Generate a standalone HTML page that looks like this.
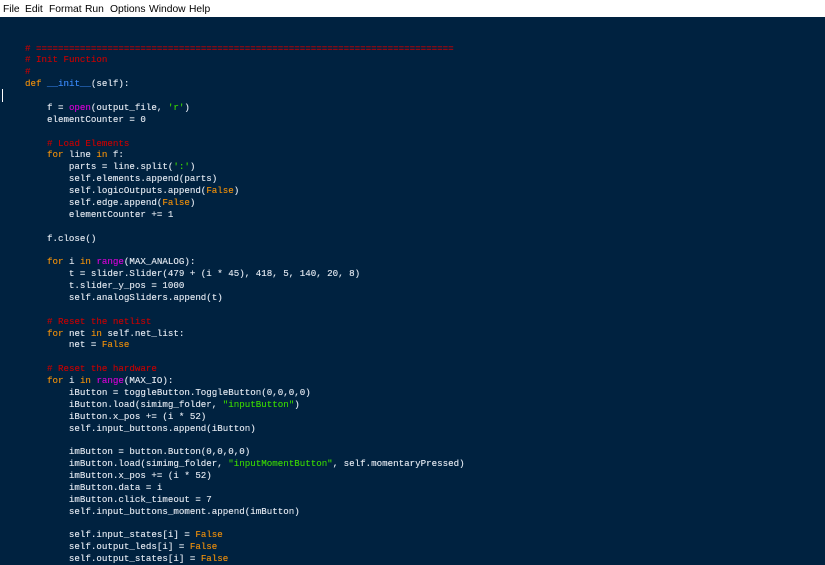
<!DOCTYPE html>
<html><head><meta charset="utf-8"><style>
html,body{margin:0;padding:0;width:825px;height:557px;overflow:hidden;background:#002240}
#menu{position:absolute;left:0;top:0;width:825px;height:17px;background:#fff;font:10.3px "Liberation Sans",sans-serif;color:#000}
#menu span{position:absolute;top:4px}
pre{position:absolute;left:3px;top:42.5px;margin:0;font:9.16px/11.88px "Liberation Mono",monospace;color:#e4eaf2;white-space:pre;-webkit-text-stroke:0.12px}
.c{color:#c80000}.k{color:#f0900a}.b{color:#d800d8}.s{color:#3ad900}.d{color:#3b8cff}
#cur{position:absolute;left:2px;top:89px;width:1px;height:13px;background:#fff}
</style></head><body>
<div id="menu"><span style="left:3px">File</span><span style="left:25px">Edit</span><span style="left:49px">Format</span><span style="left:85px">Run</span><span style="left:110px">Options</span><span style="left:149px">Window</span><span style="left:189px">Help</span></div>
<div id="cur"></div>
<pre>    <span class="c"># ============================================================================</span>
    <span class="c"># Init Function</span>
    <span class="c">#</span>
    <span class="k">def</span> <span class="d">__init__</span>(self):

        f = <span class="b">open</span>(output_file, <span class="s">'r'</span>)
        elementCounter = 0

        <span class="c"># Load Elements</span>
        <span class="k">for</span> line <span class="k">in</span> f:
            parts = line.split(<span class="s">':'</span>)
            self.elements.append(parts)
            self.logicOutputs.append(<span class="k">False</span>)
            self.edge.append(<span class="k">False</span>)
            elementCounter += 1

        f.close()

        <span class="k">for</span> i <span class="k">in</span> <span class="b">range</span>(MAX_ANALOG):
            t = slider.Slider(479 + (i * 45), 418, 5, 140, 20, 8)
            t.slider_y_pos = 1000
            self.analogSliders.append(t)

        <span class="c"># Reset the netlist</span>
        <span class="k">for</span> net <span class="k">in</span> self.net_list:
            net = <span class="k">False</span>

        <span class="c"># Reset the hardware</span>
        <span class="k">for</span> i <span class="k">in</span> <span class="b">range</span>(MAX_IO):
            iButton = toggleButton.ToggleButton(0,0,0,0)
            iButton.load(simimg_folder, <span class="s">"inputButton"</span>)
            iButton.x_pos += (i * 52)
            self.input_buttons.append(iButton)

            imButton = button.Button(0,0,0,0)
            imButton.load(simimg_folder, <span class="s">"inputMomentButton"</span>, self.momentaryPressed)
            imButton.x_pos += (i * 52)
            imButton.data = i
            imButton.click_timeout = 7
            self.input_buttons_moment.append(imButton)

            self.input_states[i] = <span class="k">False</span>
            self.output_leds[i] = <span class="k">False</span>
            self.output_states[i] = <span class="k">False</span></pre>
</body></html>
